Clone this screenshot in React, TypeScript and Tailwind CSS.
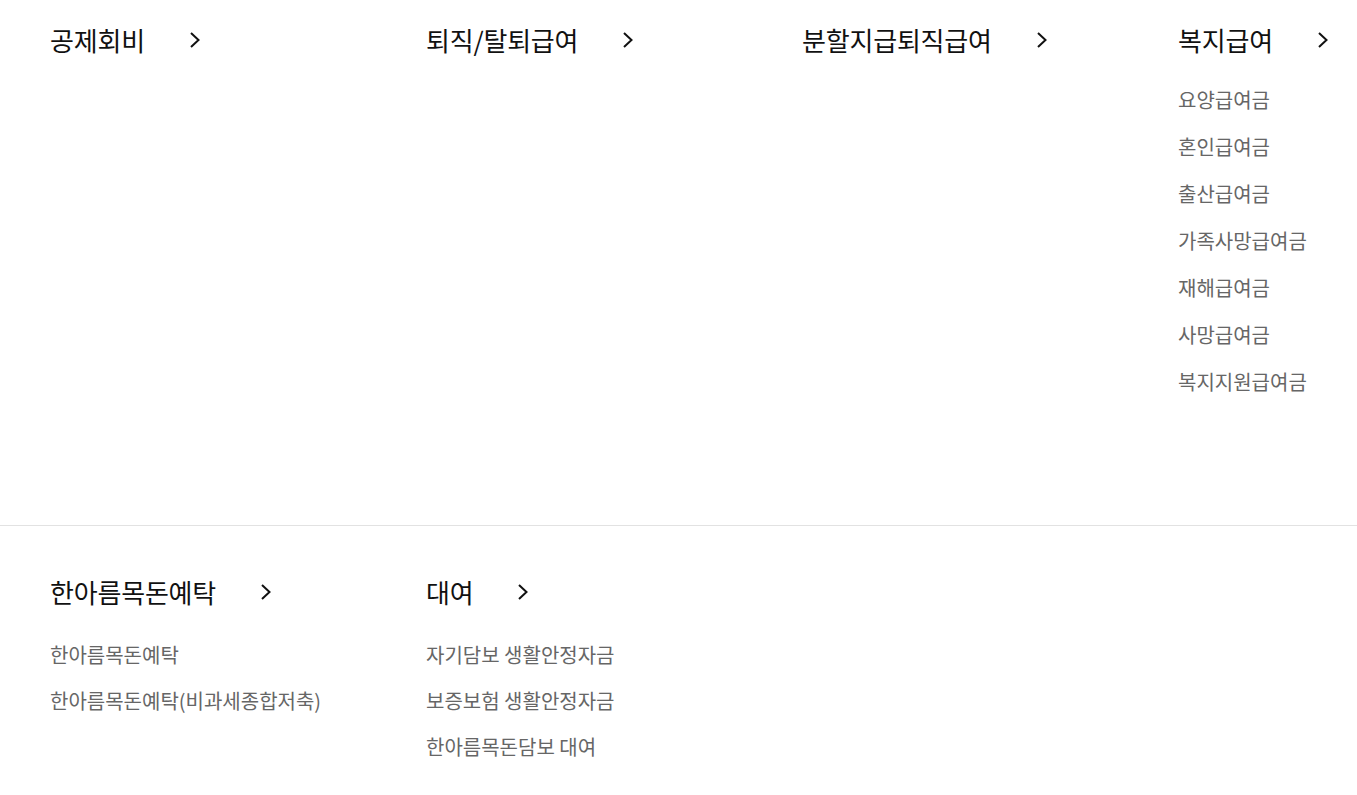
const FONT = "font-['Noto_Sans_CJK_KR','Noto_Sans',sans-serif]";

type Group = { title: string; items: string[] };

const top: Group[] = [
  { title: "공제회비", items: [] },
  { title: "퇴직/탈퇴급여", items: [] },
  { title: "분할지급퇴직급여", items: [] },
  {
    title: "복지급여",
    items: ["요양급여금", "혼인급여금", "출산급여금", "가족사망급여금", "재해급여금", "사망급여금", "복지지원급여금"],
  },
];

const bottom: Group[] = [
  { title: "한아름목돈예탁", items: ["한아름목돈예탁", "한아름목돈예탁(비과세종합저축)"] },
  { title: "대여", items: ["자기담보 생활안정자금", "보증보험 생활안정자금", "한아름목돈담보 대여"] },
];

function Chevron() {
  return (
    <svg width="12" height="18" viewBox="0 0 12 18" className="ml-[44px] shrink-0" fill="none">
      <path d="M2 2 L9.5 9 L2 16" stroke="#111" strokeWidth="2" />
    </svg>
  );
}

function Column({ g, list }: { g: Group; list: string }) {
  return (
    <div className="w-[376px] shrink-0">
      <a className="flex items-center text-[26px] leading-[34px] text-[#111] tracking-[-0.2px]">
        <span>{g.title}</span>
        <Chevron />
      </a>
      {g.items.length > 0 && (
        <ul className={list}>
          {g.items.map((it) => (
            <li key={it} className="text-[20px] text-[#666]">
              {it}
            </li>
          ))}
        </ul>
      )}
    </div>
  );
}

export default function App() {
  return (
    <div className={`min-h-screen bg-white overflow-hidden ${FONT}`}>
      {/* upper menu row */}
      <section className="flex pl-[50px] pt-[23px] pb-[120px] border-b border-[#e2e2e2]">
        {top.map((g) => (
          <Column key={g.title} g={g} list="mt-[19px] leading-[47px]" />
        ))}
      </section>
      {/* lower menu row */}
      <section className="flex pl-[50px] pt-[49px]">
        {bottom.map((g) => (
          <Column key={g.title} g={g} list="mt-[23px] leading-[46px]" />
        ))}
      </section>
    </div>
  );
}
